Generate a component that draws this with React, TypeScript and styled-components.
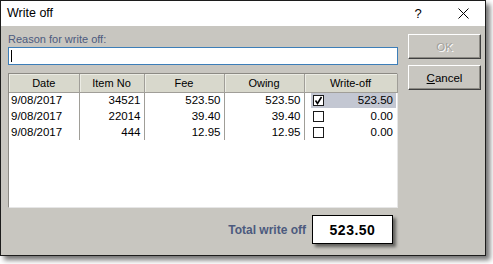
import React from 'react';
import styled, { createGlobalStyle } from 'styled-components';

// 基础颜色
const colors = {
  face: '#c8c6c0',
  label: '#4c5a7e',
  header: '#d8d8cc',
  line: '#a09e98',
  highlight: '#c3c7d2',
};

const GlobalStyle = createGlobalStyle`
  html, body {
    margin: 0;
    padding: 0;
    background: #ffffff;
  }
  * {
    box-sizing: border-box;
  }
`;

const Page = styled.div`
  width: 493px;
  height: 264px;
  font-family: 'Liberation Sans', Arial, sans-serif;
`;

const Window = styled.div`
  width: 486px;
  height: 256px;
  border: 1px solid #1c1c1c;
  background: ${colors.face};
  box-shadow: 4px 4px 5px rgba(0, 0, 0, 0.55);
  display: flex;
  flex-direction: column;
`;

const TitleBar = styled.div`
  height: 25px;
  background: #ffffff;
  display: flex;
  align-items: center;
  font-size: 12.5px;
  color: #000;
`;

const Title = styled.span`
  flex: 1;
  padding-left: 6px;
  padding-bottom: 1px;
`;

const TitleButton = styled.div<{ $w: number }>`
  width: ${(p) => p.$w}px;
  height: 25px;
  display: flex;
  align-items: center;
  justify-content: center;
  font-size: 13px;
`;

const Body = styled.div`
  flex: 1;
  display: flex;
  padding: 6px 0 0 7px;
`;

const Main = styled.div`
  width: 390px;
  display: flex;
  flex-direction: column;
`;

const Label = styled.div`
  height: 15px;
  font-size: 11px;
  line-height: 14px;
  color: ${colors.label};
`;

const TextInput = styled.div`
  height: 18px;
  background: #fff;
  border: 1px solid #3d7eb8;
  display: flex;
  align-items: center;
  padding-left: 2px;
`;

const Caret = styled.span`
  width: 1px;
  height: 12px;
  background: #000;
`;

const Grid = styled.div`
  margin-top: 8px;
  height: 135px;
  background: #fff;
  border-top: 1px solid #8c8a84;
  border-left: 1px solid #8c8a84;
  border-right: 1px solid #e6e6e6;
  border-bottom: 1px solid #e6e6e6;
`;

const Table = styled.table`
  border-collapse: collapse;
  table-layout: fixed;
  width: 100%;
  font-size: 11.5px;
  color: #000;
`;

const Th = styled.th<{ $w: number }>`
  width: ${(p) => p.$w}px;
  height: 18px;
  padding: 0;
  font-size: 11px;
  font-weight: normal;
  text-align: center;
  background: ${colors.header};
  border-right: 1px solid ${colors.line};
  border-bottom: 1px solid ${colors.line};
  box-shadow: inset 1px 1px 0 #ecece4;
`;

const Td = styled.td<{ $align?: string }>`
  height: 16px;
  padding: 0 3px 0 2px;
  text-align: ${(p) => p.$align || 'right'};
  border-right: 1px solid ${colors.line};
  white-space: nowrap;
`;

const WriteCell = styled.td`
  height: 16px;
  padding: 0 1px 0 6px;
`;

const WriteInner = styled.div<{ $active?: boolean }>`
  height: 15px;
  display: flex;
  align-items: center;
  background: ${(p) => (p.$active ? colors.highlight : 'transparent')};
  padding: 0 3px 0 2px;
`;

const Check = styled.span`
  width: 11px;
  height: 11px;
  border: 1px solid #1a1a1a;
  background: #fff;
  display: flex;
  align-items: center;
  justify-content: center;
`;

const Amount = styled.span`
  flex: 1;
  text-align: right;
`;

const TotalRow = styled.div`
  margin-top: 7px;
  display: flex;
  justify-content: flex-end;
  align-items: center;
  gap: 6px;
  padding-right: 5px;
`;

const TotalLabel = styled.span`
  font-size: 12px;
  font-weight: bold;
  color: ${colors.label};
`;

const TotalBox = styled.div`
  width: 81px;
  height: 29px;
  background: #fff;
  border: 1px solid #000;
  box-shadow: 3px 3px 3px rgba(0, 0, 0, 0.5);
  display: flex;
  align-items: center;
  justify-content: center;
  font-size: 14px;
  font-weight: bold;
  letter-spacing: 0.5px;
`;

const Side = styled.div`
  margin-left: 10px;
  padding-top: 2px;
  display: flex;
  flex-direction: column;
  gap: 6px;
`;

const Button = styled.div<{ $disabled?: boolean }>`
  width: 73px;
  height: 25px;
  display: flex;
  align-items: center;
  justify-content: center;
  font-size: 11.5px;
  background: ${colors.face};
  border-top: 1px solid #ffffff;
  border-left: 1px solid #ffffff;
  border-right: 1px solid #404040;
  border-bottom: 1px solid #404040;
  box-shadow: inset -1px -1px 0 #8c8a84;
  color: ${(p) => (p.$disabled ? '#a3a19c' : '#000')};
  text-shadow: ${(p) => (p.$disabled ? '1px 1px 0 #ffffff' : 'none')};
`;

const rows = [
  { date: '9/08/2017', item: '34521', fee: '523.50', owing: '523.50', checked: true, off: '523.50' },
  { date: '9/08/2017', item: '22014', fee: '39.40', owing: '39.40', checked: false, off: '0.00' },
  { date: '9/08/2017', item: '444', fee: '12.95', owing: '12.95', checked: false, off: '0.00' },
];

export default function App() {
  return (
    <Page>
      <GlobalStyle />
      <Window>
        <TitleBar>
          <Title>Write off</Title>
          <TitleButton $w={48}>?</TitleButton>
          <TitleButton $w={43}>
            <svg width="11" height="11" viewBox="0 0 11 11">
              <path d="M0.5 0.5 L10.5 10.5 M10.5 0.5 L0.5 10.5" stroke="#000" strokeWidth="1" />
            </svg>
          </TitleButton>
        </TitleBar>
        <Body>
          <Main>
            <Label>Reason for write off:</Label>
            <TextInput>
              <Caret />
            </TextInput>
            <Grid>
              <Table>
                <thead>
                  <tr>
                    <Th $w={70}>Date</Th>
                    <Th $w={65}>Item No</Th>
                    <Th $w={80}>Fee</Th>
                    <Th $w={80}>Owing</Th>
                    <Th $w={93}>Write-off</Th>
                  </tr>
                </thead>
                <tbody>
                  {rows.map((r, i) => (
                    <tr key={i}>
                      <Td $align="left">{r.date}</Td>
                      <Td>{r.item}</Td>
                      <Td>{r.fee}</Td>
                      <Td>{r.owing}</Td>
                      <WriteCell>
                        <WriteInner $active={i === 0}>
                          <Check>
                            {r.checked && (
                              <svg width="9" height="9" viewBox="0 0 9 9">
                                <path d="M1.5 4.5 L3.5 7.5 L7.5 1" stroke="#000" strokeWidth="1.6" fill="none" />
                              </svg>
                            )}
                          </Check>
                          <Amount>{r.off}</Amount>
                        </WriteInner>
                      </WriteCell>
                    </tr>
                  ))}
                </tbody>
              </Table>
            </Grid>
            <TotalRow>
              <TotalLabel>Total write off</TotalLabel>
              <TotalBox>523.50</TotalBox>
            </TotalRow>
          </Main>
          <Side>
            <Button $disabled>OK</Button>
            <Button>
              <span>
                <u>C</u>ancel
              </span>
            </Button>
          </Side>
        </Body>
      </Window>
    </Page>
  );
}
